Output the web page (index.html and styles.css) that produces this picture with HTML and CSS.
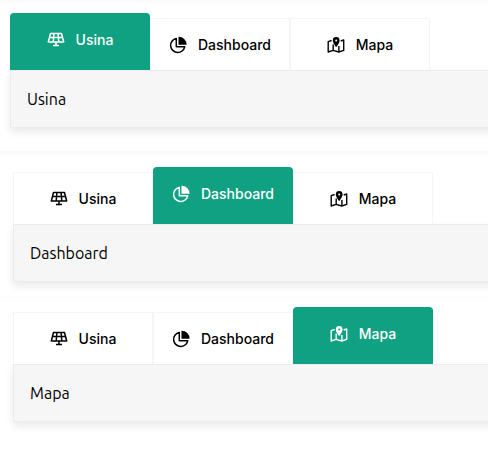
FILE: index.html
```html
<!DOCTYPE html>
<html lang="pt">
<head>
<meta charset="utf-8">
<title>Usina</title>
<link rel="stylesheet" href="styles.css">
</head>
<body>
<svg class="sprite" aria-hidden="true">
  <symbol id="solar" viewBox="0 0 18 18">
    <path d="M3.500 2.500h11l2.200 8.500H1.300zM2.500 6.500h13M6.900 2.500L6.200 11M11.100 2.500l.7 8.500M9 11v3.500M6 14.500h6" fill="none" stroke="currentColor" stroke-width="1.500" stroke-linejoin="round"/>
  </symbol>
  <symbol id="pie" viewBox="0 0 18 18">
    <path d="M7.300 2.400A7.100 7.100 0 1 0 15.700 10.800H7.300z" fill="none" stroke="currentColor" stroke-width="1.500" stroke-linejoin="round"/>
    <path d="M9.500.8A7.900 7.900 0 0 1 17.600 8.800H9.500z" fill="currentColor"/>
  </symbol>
  <symbol id="map" viewBox="0 0 18 18">
    <path d="M4.600 4.500L1.200 5.700V16l4.900-1.600 5.700 1.600 4.900-1.600V4l-3 1M6.200 8.600v5.600M11.900 10v5.600" fill="none" stroke="currentColor" stroke-width="1.400" stroke-linejoin="round"/>
    <path fill-rule="evenodd" d="M9.200 1a3.400 3.400 0 0 0-3.400 3.400C5.800 6.800 9.200 11 9.200 11s3.400-4.200 3.400-6.600A3.400 3.400 0 0 0 9.200 1zm0 2.400a1 1 0 1 1 0 2 1 1 0 0 1 0-2z" fill="currentColor"/>
  </symbol>
</svg>
<section class="example example-first">
  <div class="tabs" role="tablist">
    <button class="tab active" role="tab" aria-selected="true"><svg class="icon"><use href="#solar"/></svg>Usina</button>
    <button class="tab" role="tab"><svg class="icon"><use href="#pie"/></svg>Dashboard</button>
    <button class="tab" role="tab"><svg class="icon"><use href="#map"/></svg>Mapa</button>
  </div>
  <div class="panel" role="tabpanel">Usina</div>
</section>
<section class="example example-middle">
  <div class="tabs" role="tablist">
    <button class="tab" role="tab"><svg class="icon"><use href="#solar"/></svg>Usina</button>
    <button class="tab active" role="tab" aria-selected="true"><svg class="icon"><use href="#pie"/></svg>Dashboard</button>
    <button class="tab" role="tab"><svg class="icon"><use href="#map"/></svg>Mapa</button>
  </div>
  <div class="panel" role="tabpanel">Dashboard</div>
</section>
<section class="example example-last">
  <div class="tabs" role="tablist">
    <button class="tab" role="tab"><svg class="icon"><use href="#solar"/></svg>Usina</button>
    <button class="tab" role="tab"><svg class="icon"><use href="#pie"/></svg>Dashboard</button>
    <button class="tab active" role="tab" aria-selected="true"><svg class="icon"><use href="#map"/></svg>Mapa</button>
  </div>
  <div class="panel" role="tabpanel">Mapa</div>
</section>
</body>
</html>
```
FILE: styles.css
```css
* {
  box-sizing: border-box;
}

body {
  margin: 0;
  background: #fff;
  color: #000;
  overflow-x: hidden;
}

.sprite {
  display: none;
}

.example {
  padding-left: 13px;
  background: linear-gradient(#f9f9f9, #fff 6px);
}

.example-first {
  padding: 13px 0 23px 10px;
}

.example-middle {
  padding-top: 16px;
  padding-bottom: 14px;
}

.example-last {
  padding-top: 11px;
  padding-bottom: 32px;
  background: linear-gradient(#fdfdfd, #fff 6px);
}

.tabs {
  display: flex;
  align-items: flex-end;
}

.tab {
  display: flex;
  align-items: center;
  justify-content: center;
  gap: 11px;
  width: 140px;
  height: 52px;
  padding: 1px 0 0;
  border: 1px solid #f5f5f5;
  border-bottom: 0;
  background: #fff;
  color: #000;
  font: 500 14px/20px Inter, sans-serif;
}

.tab.active {
  height: 57px;
  padding-bottom: 5px;
  border-color: #10a082;
  border-radius: 4px 4px 0 0;
  background: #10a082;
  color: #fff;
}

.icon {
  width: 18px;
  height: 18px;
}

.panel {
  margin-right: -10px;
  padding: 16px;
  border: 1px solid #ebebeb;
  background: #f6f6f6;
  box-shadow: 0 4px 8px rgba(0, 0, 0, 0.09);
  font: 16px/24px Ubuntu, "Noto Sans", sans-serif;
}
```
